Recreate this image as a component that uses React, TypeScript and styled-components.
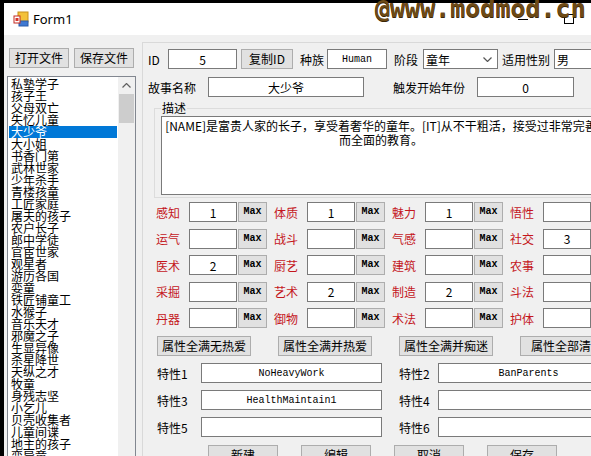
import React from 'react';
import styled, { createGlobalStyle } from 'styled-components';

const GlobalStyle = createGlobalStyle`
  html, body {
    margin: 0;
    padding: 0;
    background: #000;
    overflow: hidden;
  }
  body {
    font-family: "Noto Sans CJK SC", "Noto Sans", sans-serif;
    font-size: 12px;
    color: #000;
  }
`;

const Desktop = styled.div`
  position: relative;
  width: 591px;
  height: 456px;
  overflow: hidden;
  background: #000;
  padding: 3px 0 0 4px;
  box-sizing: border-box;
`;

const Watermark = styled.div`
  position: absolute;
  left: 375px;
  top: -6px;
  font-family: "DejaVu Sans Mono", monospace;
  font-weight: bold;
  font-size: 25px;
  line-height: 30px;
  color: #6d4a16;
  white-space: nowrap;
  text-shadow: 0 1px 0 #3b2606;
  pointer-events: none;
`;

const Window = styled.div`
  width: 634px;
  height: 100%;
  display: flex;
  flex-direction: column;
  background: #f0f0f0;
`;

const TitleBar = styled.div`
  height: 32px;
  flex-shrink: 0;
  background: #fff;
  display: flex;
  align-items: center;
  padding-left: 9px;
`;

const TitleText = styled.span`
  margin-left: 4px;
  font-family: "Noto Sans", "Open Sans", sans-serif;
  font-size: 13px;
`;

const Controls = styled.div`
  margin-left: auto;
  display: flex;
  height: 100%;
`;

const ControlButton = styled.div`
  width: 46px;
  height: 100%;
  display: flex;
  align-items: center;
  justify-content: center;
`;

const MinGlyph = styled.span`
  width: 10px;
  height: 1px;
  background: #000;
`;

const MaxGlyph = styled.span`
  width: 10px;
  height: 10px;
  border: 1px solid #000;
  box-sizing: border-box;
`;

const Client = styled.div`
  flex: 1;
  display: flex;
  min-height: 0;
  overflow: hidden;
`;

const LeftPanel = styled.div`
  width: 138px;
  flex-shrink: 0;
  padding-top: 13px;
  display: flex;
  flex-direction: column;
`;

const FileButtons = styled.div`
  display: flex;
  gap: 5px;
  margin-left: 5px;
`;

const WinButton = styled.button<{ $w: number }>`
  width: ${p => p.$w}px;
  height: 20px;
  flex-shrink: 0;
  padding: 0;
  margin: 0;
  background: #e1e1e1;
  border: 1px solid #adadad;
  font-family: "Noto Sans CJK SC", sans-serif;
  font-size: 12px;
  line-height: 18px;
  color: #000;
  white-space: nowrap;
`;

const MaxButton = styled(WinButton)`
  margin-left: 1px;
  font-family: "Liberation Mono", monospace;
  font-size: 10px;
  font-weight: bold;
`;

const ListBox = styled.div`
  margin: 8px 0 0 3px;
  width: 129px;
  height: 400px;
  flex-shrink: 0;
  box-sizing: border-box;
  border: 1px solid #828790;
  background: #fff;
  display: flex;
`;

const Items = styled.div`
  flex: 1;
  padding-top: 1px;
`;

const Item = styled.div<{ $selected?: boolean }>`
  height: 12px;
  line-height: 12px;
  margin: 0 1px;
  padding-left: 2px;
  white-space: nowrap;
  font-size: 12px;
  background: ${p => (p.$selected ? '#0078d7' : 'transparent')};
  color: ${p => (p.$selected ? '#fff' : '#000')};
`;

const ScrollBar = styled.div`
  width: 17px;
  flex-shrink: 0;
  background: #f0f0f0;
  display: flex;
  flex-direction: column;
  align-items: center;
`;

const ScrollArrow = styled.div`
  height: 17px;
  width: 17px;
  display: flex;
  align-items: center;
  justify-content: center;
`;

const ScrollThumb = styled.div`
  width: 15px;
  height: 29px;
  background: #cdcdcd;
`;

const RightPanel = styled.div`
  flex: 1;
  margin-top: 7px;
  border-left: 1px solid #d9d9d9;
  border-top: 1px solid #d9d9d9;
  padding: 6px 0 0 5px;
  overflow: hidden;
  display: flex;
  flex-direction: column;
`;

const Row = styled.div<{ $mt?: number; $ml?: number; $gap?: number }>`
  display: flex;
  align-items: center;
  height: 20px;
  flex-shrink: 0;
  margin-top: ${p => p.$mt || 0}px;
  margin-left: ${p => p.$ml || 0}px;
  gap: ${p => p.$gap || 0}px;
`;

const Label = styled.span<{ $w: number; $ml?: number; $red?: boolean }>`
  width: ${p => p.$w}px;
  margin-left: ${p => p.$ml || 0}px;
  flex-shrink: 0;
  white-space: nowrap;
  font-size: 12px;
  color: ${p => (p.$red ? '#c4161c' : '#000')};
`;

const TextBox = styled.input<{ $w: number; $mono?: boolean; $left?: boolean }>`
  width: ${p => p.$w}px;
  height: 20px;
  flex-shrink: 0;
  box-sizing: border-box;
  margin: 0;
  padding: 0 2px;
  background: #fff;
  border: 1px solid #7a7a7a;
  outline: none;
  color: #000;
  text-align: ${p => (p.$left ? 'left' : 'center')};
  font-family: ${p => (p.$mono ? '"Liberation Mono", monospace' : '"Noto Sans CJK SC", sans-serif')};
  font-size: ${p => (p.$mono ? 10 : 12)}px;
`;

const Combo = styled.div<{ $w: number }>`
  width: ${p => p.$w}px;
  height: 20px;
  flex-shrink: 0;
  box-sizing: border-box;
  background: #fff;
  border: 1px solid #7a7a7a;
  display: flex;
  align-items: center;
  padding: 0 5px 0 2px;
  font-size: 12px;
  span { flex: 1; }
`;

const GroupBox = styled.fieldset`
  margin: 4px 0 0 6px;
  padding: 1px 6px 2px 6px;
  width: 470px;
  box-sizing: border-box;
  border: 1px solid #dcdcdc;
  flex-shrink: 0;
  legend {
    padding: 0 1px;
    font-size: 12px;
    line-height: 14px;
  }
`;

const Description = styled.textarea`
  display: block;
  width: 440px;
  height: 79px;
  box-sizing: border-box;
  margin: 0;
  padding: 2px 1px;
  border: 1px solid #7a7a7a;
  background: #fff;
  resize: none;
  outline: none;
  overflow: hidden;
  white-space: pre;
  text-align: center;
  font-family: "Noto Sans CJK SC", sans-serif;
  font-size: 12px;
  line-height: 14px;
  color: #000;
`;

const StatGrid = styled.div`
  margin: 4px 0 0 8px;
  display: grid;
  grid-template-columns: repeat(4, 111px);
  column-gap: 7px;
  row-gap: 6.5px;
  flex-shrink: 0;
`;

const StatCell = styled.div`
  display: flex;
  align-items: center;
  height: 20px;
`;

const TraitGrid = styled.div`
  margin-top: 7px;
  display: flex;
  flex-direction: column;
  gap: 7px;
  flex-shrink: 0;
`;

const FormIcon = () => (
  <svg width="16" height="16" viewBox="0 0 16 16">
    <rect x="5" y="1" width="10" height="10" fill="#f3c13a" stroke="#c8901c" strokeWidth="1" />
    <rect x="6" y="10" width="9" height="5" fill="#3f78d1" stroke="#2a5aa8" strokeWidth="1" />
    <rect x="1" y="5" width="6" height="7" fill="#fff" stroke="#c42b22" strokeWidth="1" />
    <rect x="2.5" y="7" width="3" height="3" fill="#d8362c" />
  </svg>
);

const Chevron = ({ up }: { up?: boolean }) => (
  <svg width="9" height="5" viewBox="0 0 9 5">
    <path d={up ? 'M0.5 4.5 L4.5 0.5 L8.5 4.5' : 'M0.5 0.5 L4.5 4.5 L8.5 0.5'} fill="none" stroke={up ? '#606060' : '#555'} strokeWidth="1.2" />
  </svg>
);

const stories = [
  '私塾学子', '孩子王', '父母双亡', '失忆儿童', '大少爷', '大小姐', '书香门第', '武林世家',
  '少年杀手', '青楼孩童', '工匠家庭', '屠夫的孩子', '农户长子', '郎中学徒', '官宦世家', '观星者',
  '游历各国', '娈童', '铁匠铺童工', '水猴子', '音乐天才', '邪魔之子', '生显异像', '杀星降世',
  '天纵之才', '牧童', '身残志坚', '小乞儿', '贝壳收集者', '儿童间谍', '地主的孩子', '变异童',
];

const stats: [string, string][] = [
  ['感知', '1'], ['体质', '1'], ['魅力', '1'], ['悟性', ''],
  ['运气', ''], ['战斗', ''], ['气感', ''], ['社交', '3'],
  ['医术', '2'], ['厨艺', ''], ['建筑', ''], ['农事', ''],
  ['采掘', ''], ['艺术', '2'], ['制造', '2'], ['斗法', ''],
  ['丹器', ''], ['御物', ''], ['术法', ''], ['护体', ''],
];

const traits = [
  ['NoHeavyWork', 'BanParents'],
  ['HealthMaintain1', ''],
  ['', ''],
];

const description =
  '[NAME]是富贵人家的长子，享受着奢华的童年。[IT]从不干粗活，接受过非常完善\n而全面的教育。';

export default function App() {
  return (
    <>
      <GlobalStyle />
      <Desktop>
        <Window>
          <TitleBar>
            <FormIcon />
            <TitleText>Form1</TitleText>
            <Controls>
              <ControlButton><MinGlyph /></ControlButton>
              <ControlButton><MaxGlyph /></ControlButton>
              <ControlButton>✕</ControlButton>
            </Controls>
          </TitleBar>
          <Client>
            <LeftPanel>
              <FileButtons>
                <WinButton $w={60}>打开文件</WinButton>
                <WinButton $w={60}>保存文件</WinButton>
              </FileButtons>
              <ListBox>
                <Items>
                  {stories.map((s, i) => (
                    <Item key={i} $selected={s === '大少爷'}>{s}</Item>
                  ))}
                </Items>
                <ScrollBar>
                  <ScrollArrow><Chevron up /></ScrollArrow>
                  <ScrollThumb />
                </ScrollBar>
              </ListBox>
            </LeftPanel>

            <RightPanel>
              <Row>
                <Label $w={20}>ID</Label>
                <TextBox $w={69} readOnly value="5" />
                <WinButton $w={52} style={{ marginLeft: 4 }}>复制ID</WinButton>
                <Label $w={27} $ml={7}>种族</Label>
                <TextBox $w={60} $mono readOnly value="Human" />
                <Label $w={29} $ml={7}>阶段</Label>
                <Combo $w={75}>
                  <span>童年</span>
                  <Chevron />
                </Combo>
                <Label $w={52} $ml={4}>适用性别</Label>
                <TextBox $w={60} $left readOnly value="男" />
              </Row>

              <Row $mt={8}>
                <Label $w={60}>故事名称</Label>
                <TextBox $w={156} readOnly value="大少爷" />
                <Label $w={84} $ml={29}>触发开始年份</Label>
                <TextBox $w={97} readOnly value="0" />
              </Row>

              <GroupBox>
                <legend>描述</legend>
                <Description readOnly value={description} />
              </GroupBox>

              <StatGrid>
                {stats.map(([name, value], i) => (
                  <StatCell key={i}>
                    <Label $w={33} $red>{name}</Label>
                    <TextBox $w={48} readOnly value={value} />
                    <MaxButton $w={29}>Max</MaxButton>
                  </StatCell>
                ))}
              </StatGrid>

              <Row $mt={8} $ml={9} $gap={27}>
                <WinButton $w={94}>属性全满无热爱</WinButton>
                <WinButton $w={94}>属性全满并热爱</WinButton>
                <WinButton $w={94}>属性全满并痴迷</WinButton>
                <WinButton $w={94}>属性全部清零</WinButton>
              </Row>

              <TraitGrid>
                {traits.map(([a, b], i) => (
                  <Row key={i}>
                    <Label $w={44} $ml={9}>特性{i * 2 + 1}</Label>
                    <TextBox $w={181} $mono readOnly value={a} />
                    <Label $w={39} $ml={17}>特性{i * 2 + 2}</Label>
                    <TextBox $w={181} $mono readOnly value={b} />
                  </Row>
                ))}
              </TraitGrid>

              <Row $mt={8} $ml={60} $gap={23}>
                <WinButton $w={70}>新建</WinButton>
                <WinButton $w={70}>编辑</WinButton>
                <WinButton $w={70}>取消</WinButton>
                <WinButton $w={70}>保存</WinButton>
              </Row>
            </RightPanel>
          </Client>
        </Window>
        <Watermark>@www.modmod.cn</Watermark>
      </Desktop>
    </>
  );
}
